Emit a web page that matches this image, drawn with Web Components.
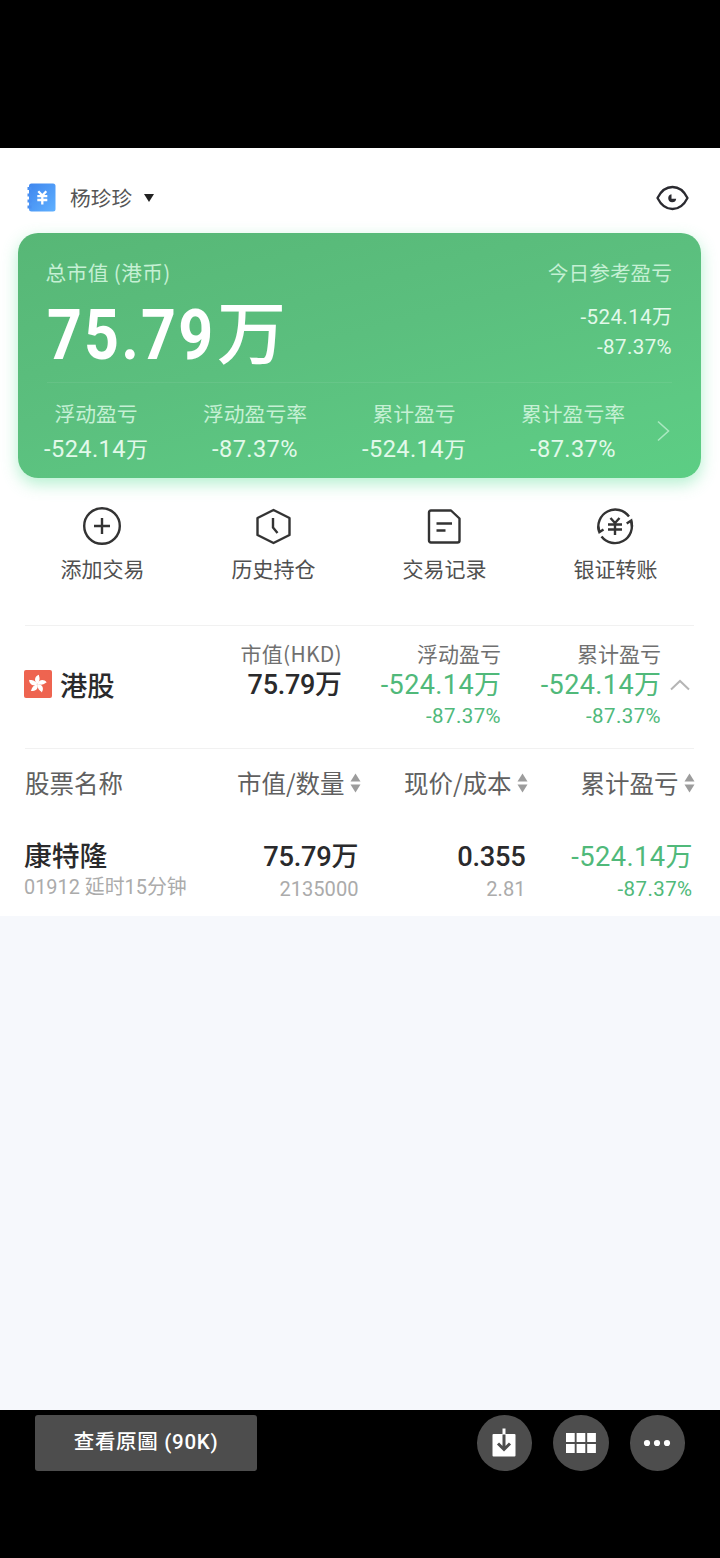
<!DOCTYPE html>
<html lang="zh-CN">
<head>
<meta charset="utf-8">
<meta name="viewport" content="width=device-width, initial-scale=1">
<title>持仓</title>
<style>
    body {
        margin: 0;
        background: #000;
        font-family: "Noto Sans CJK SC", sans-serif;
        color: #2a2a2c;
    }
</style>
</head>
<body>

<template id="template-amount">
    <style>
        :host {
            display: block;
            white-space: nowrap;
            font-family: Roboto, "Noto Sans CJK SC", sans-serif;
            font-size: var(--size, 24px);
            letter-spacing: var(--spacing, 0.4px);
        }
        .number {
            display: inline-block;
            transform: var(--condense, none);
            transform-origin: 0 50%;
            margin-right: var(--pull, 0);
        }
        .unit {
            font-family: "Noto Sans CJK SC", sans-serif;
            font-size: var(--unit-size, 0.9em);
            font-weight: var(--unit-weight, inherit);
            line-height: 1px;
            letter-spacing: 0;
        }
    </style>
    <span class="number"></span><span class="unit"></span>
</template>

<template id="template-header">
    <style>
        :host {
            display: flex;
            align-items: center;
            height: 85px;
            padding: 0 31px 0 27px;
            box-sizing: border-box;
            font-size: 20.7px;
            line-height: 30px;
            color: #555;
        }
        .name {
            margin-left: 14px;
            padding-top: 12px;
        }
        .book { margin-top: 14px; }
        .caret {
            margin: 14px auto 0 11px;
        }
        .eye { margin-top: 14px; }
        svg { display: block; }
    </style>
    <svg class="book" width="29" height="29" viewBox="0 0 29 29">
        <defs>
            <linearGradient id="book" x1="0" y1="0" x2="1" y2="1">
                <stop offset="0" stop-color="#3f86ee"/>
                <stop offset="1" stop-color="#5fb0ff"/>
            </linearGradient>
        </defs>
        <rect x="2" y="0.5" width="26.5" height="28" rx="2.5" fill="url(#book)"/>
        <path d="M0.5 5.500h4M0.5 12h4M0.5 18h4M0.500 24h4" stroke="#4a90f2" stroke-width="3"/>
        <path d="M11.300 8.300l4 4.200 4-4.200M10.300 13.200h10M10.300 17h10M15.300 12.500v9" fill="none" stroke="#fff" stroke-width="2.300"/>
    </svg>
    <div class="name"><slot></slot></div>
    <svg class="caret" width="12" height="10" viewBox="0 0 12 10">
        <path d="M1 1h10L6 9z" fill="#222"/>
    </svg>
    <svg class="eye" width="33" height="26" viewBox="0 0 33 26" fill="none">
        <path d="M1.500 13C5 6 10 2 16.500 2S28 6 31.500 13C28 20 23 24 16.500 24S5 20 1.500 13z" stroke="#2a2a30" stroke-width="2.300" stroke-linejoin="round"/>
        <path d="M15.500 9.300A4 4 0 1 0 20.200 13.700H15.500z" fill="#2a2a30"/>
    </svg>
</template>

<template id="template-card">
    <style>
        :host {
            display: block;
            height: 245px;
            margin: 0 19px 0 17.5px;
            border-radius: 20px;
            background: linear-gradient(165deg, #57b776 0%, #5bbf7e 45%, #5dc983 80%, #5cce84 100%);
            box-shadow: 0 6px 16px rgba(92, 222, 150, 0.45);
            color: #e2f9ea;
        }
        .top {
            display: flex;
            justify-content: space-between;
            height: 150px;
            margin: 0 29px;
            box-sizing: border-box;
            padding-top: 24px;
            border-bottom: 1px solid rgba(255, 255, 255, 0.07);
        }
        .label {
            font-size: 20.7px;
            line-height: 30px;
            color: #c5f0d4;
        }
        .hkd {
            letter-spacing: 0.4px;
            margin-left: -1px;
        }
        .today {
            text-align: right;
            --size: 20.5px;
            --unit-size: 20px;
            line-height: 29.5px;
        }
        .today .label { margin-bottom: 16px; }
        .total {
            --size: 70px;
            --unit-size: 69px;
            --unit-weight: 500;
            --spacing: 2.5px;
            --condense: scaleX(0.87);
            --pull: -23px;
            font-weight: 700;
            line-height: 96px;
            color: #fff;
        }
    </style>
    <div class="top">
        <div>
            <div class="label hkd">总市值 (港币)</div>
            <fund-amount class="total" value="75.79" unit="万"></fund-amount>
        </div>
        <div class="today">
            <div class="label">今日参考盈亏</div>
            <fund-amount value="-524.14" unit="万"></fund-amount>
            <fund-amount value="-87.37%"></fund-amount>
        </div>
    </div>
    <slot></slot>
</template>

<template id="template-stats">
    <style>
        :host {
            display: grid;
            grid-template-columns: repeat(4, 159px) 1fr;
            margin-left: -1px;
            padding-top: 15px;
        }
        svg {
            display: block;
            margin: 22px 0 0 3px;
        }
    </style>
    <slot></slot>
    <svg width="15" height="22" viewBox="0 0 15 22">
        <path d="M2 1.500L12.500 11 2 20.500" fill="none" stroke="#a9e8c0" stroke-width="1.600"/>
    </svg>
</template>

<template id="template-stat">
    <style>
        :host {
            display: block;
            text-align: center;
        }
        .label {
            font-size: 20.8px;
            line-height: 30px;
            color: #c5f0d4;
        }
        fund-amount {
            --size: 23.6px;
            --unit-size: 22px;
            --spacing: 0.4px;
            line-height: 43px;
        }
    </style>
    <div class="label"></div>
    <fund-amount></fund-amount>
</template>

<template id="template-actions">
    <style>
        :host {
            display: grid;
            grid-template-columns: repeat(4, 171px);
            margin-left: 17px;
            height: 147px;
            padding-top: 29px;
            box-sizing: border-box;
        }
    </style>
    <slot></slot>
</template>

<template id="template-action">
    <style>
        :host {
            display: flex;
            flex-direction: column;
            align-items: center;
            font-size: 21px;
            line-height: 30px;
            color: #505050;
        }
        ::slotted(svg) {
            display: block;
            width: 40px;
            height: 40px;
            margin: -1px 1px 7px 0;
            fill: none;
            stroke: #333;
            stroke-width: 2.4px;
        }
    </style>
    <slot name="icon"></slot>
    <div><slot></slot></div>
</template>

<template id="template-market">
    <style>
        :host {
            display: grid;
            grid-template-columns: 200px 117px 159px 160px 1fr;
            height: 122px;
            margin: 0 26px 0 25px;
            border-top: 1px solid #f1f1f1;
            border-bottom: 1px solid #f1f1f1;
        }
        .market {
            display: flex;
            align-items: center;
            gap: 8px;
            height: 116px;
            margin-left: -1px;
            font-size: 27.3px;
            font-weight: 500;
        }
        .market span { margin-top: -1px; }
        .fold {
            margin: 53px 0 0 8px;
        }
    </style>
    <div class="market">
        <svg width="28" height="28" viewBox="0 0 28 28">
            <defs>
                <path id="petal" d="M14 14.500C10.500 12 10.500 7 15.500 5.200C15 7 18 9 14 14.500z"/>
            </defs>
            <rect width="28" height="28" rx="2" fill="#ee6450"/>
            <g fill="#fff" transform="translate(-0.500 -0.500)">
                <use href="#petal"/>
                <use href="#petal" transform="rotate(72 14 14.500)"/>
                <use href="#petal" transform="rotate(144 14 14.500)"/>
                <use href="#petal" transform="rotate(216 14 14.500)"/>
                <use href="#petal" transform="rotate(288 14 14.500)"/>
            </g>
        </svg>
        <span>港股</span>
    </div>
    <slot></slot>
    <svg class="fold" width="22" height="12" viewBox="0 0 22 12">
        <path d="M2 10.500L11 2l9 8.500" fill="none" stroke="#b5b5b5" stroke-width="2"/>
    </svg>
</template>

<template id="template-figure">
    <style>
        :host {
            display: block;
            text-align: right;
            padding-top: 12px;
            font-weight: 500;
            --size: 27px;
            --unit-size: 27px;
        }
        :host([loss]) {
            font-weight: 400;
            --color: #50b97a;
        }
        .label {
            font-size: 21px;
            font-weight: 400;
            line-height: 30px;
            color: #707070;
        }
        .main {
            line-height: 35px;
            color: var(--color, #2a2a2c);
        }
        :host(:not([loss])) .main { --spacing: -0.3px; }
        :host(:not([loss])) .label { letter-spacing: 0.3px; }
        .rate {
            --size: 20.5px;
            line-height: 27px;
            color: var(--color);
        }
    </style>
    <div class="label"></div>
    <fund-amount class="main"></fund-amount>
    <fund-amount class="rate"></fund-amount>
</template>

<template id="template-table">
    <style>
        :host {
            display: grid;
            grid-template-columns: 200px 133.5px 167px 167px;
            margin: 0 26px 0 25px;
            height: 167px;
            box-sizing: border-box;
            padding-top: 16px;
            grid-template-rows: 74px auto;
        }
    </style>
    <slot></slot>
</template>

<template id="template-heading">
    <style>
        :host {
            display: flex;
            justify-content: flex-end;
            align-items: center;
            white-space: nowrap;
            height: 36px;
            font-size: 24.5px;
            line-height: 36px;
            color: #606060;
        }
        :host([plain]) { justify-content: flex-start; }
        :host([plain]) svg { display: none; }
        svg {
            flex: none;
            margin: 0 -2px 0 5px;
        }
    </style>
    <slot></slot>
    <svg width="11" height="20" viewBox="0 0 11 20" fill="#9c9c9c">
        <path d="M5.500 0.500L10.500 8.500H0.500z"/>
        <path d="M5.500 19.500L0.500 11.500h10z"/>
    </svg>
</template>

<template id="template-cell">
    <style>
        :host {
            display: block;
            text-align: right;
            white-space: nowrap;
            --size: 27.3px;
            --unit-size: 27px;
        }
        :host([name]) {
            text-align: left;
            margin: -3px 0 0 -1px;
        }
        .name {
            font-size: 27.8px;
            font-weight: 500;
            line-height: 37px;
        }
        .main {
            line-height: 36px;
            font-weight: 500;
            --spacing: -0.3px;
        }
        .sub {
            --size: 20.1px;
            --spacing: 0;
            line-height: 29px;
            color: #ababab;
        }
        :host([name]) .sub {
            --size: 19.9px;
        }
        :host([loss]) {
            color: #50b97a;
        }
        :host([loss]) .main {
            font-weight: 400;
            --spacing: 0.4px;
        }
        :host([loss]) .sub {
            color: inherit;
            --size: 20.500px;
            --spacing: 0.4px;
        }
    </style>
    <div class="name"></div>
    <fund-amount class="main"></fund-amount>
    <fund-amount class="sub"></fund-amount>
</template>

<template id="template-viewer-bar">
    <style>
        :host {
            display: flex;
            align-items: center;
            gap: 21px;
            height: 148px;
            box-sizing: border-box;
            padding: 5px 35px 87px;
            background: #000;
        }
        .original {
            width: 222px;
            height: 56px;
            margin-right: auto;
            border-radius: 3px;
            background: #4d4d4d;
            color: #fff;
            font: 500 20.5px/55px Roboto, "Noto Sans CJK TC", sans-serif;
            text-align: center;
            letter-spacing: 0.7px;
        }
        .round {
            display: grid;
            place-items: center;
            width: 55.500px;
            height: 56px;
            border-radius: 50%;
            background: #4d4d4d;
        }
        svg { display: block; fill: #fff; }
    </style>
    <div class="original"><slot></slot></div>
    <div class="round">
        <svg width="30" height="30" viewBox="0 0 30 30">
            <path d="M4.500 6h21q1 0 1 1v20.500q0 1-1 1h-21q-1 0-1-1V7q0-1 1-1z"/>
            <path d="M13.500 0.500h3V6h-3z"/>
            <path d="M15 6.500V21M9 15.500l6 6 6-6" fill="none" stroke="#4d4d4d" stroke-width="3"/>
        </svg>
    </div>
    <div class="round">
        <svg width="30" height="20" viewBox="0 0 30 20">
            <rect width="8.700" height="9"/>
            <rect x="10.600" width="8.700" height="9"/>
            <rect x="21.200" width="8.700" height="9"/>
            <rect y="11" width="8.700" height="9"/>
            <rect x="10.600" y="11" width="8.700" height="9"/>
            <rect x="21.200" y="11" width="8.700" height="9"/>
        </svg>
    </div>
    <div class="round">
        <svg width="28" height="8" viewBox="0 0 28 8">
            <circle cx="4" cy="4" r="3.100"/>
            <circle cx="14" cy="4" r="3.100"/>
            <circle cx="24" cy="4" r="3.100"/>
        </svg>
    </div>
</template>

<template id="template-page">
    <style>
        :host {
            display: flex;
            flex-direction: column;
            height: 1558px;
            box-sizing: border-box;
            padding-top: 148px;
        }
        .sheet {
            height: 768px;
            background: #fff;
        }
        .rest {
            flex: 1;
            background: #f6f8fc;
        }
    </style>
    <div class="sheet"><slot></slot></div>
    <div class="rest"></div>
    <slot name="footer"></slot>
</template>

<fund-page>
    <fund-header>杨珍珍</fund-header>
    <fund-card>
        <fund-stats>
            <fund-stat label="浮动盈亏" value="-524.14" unit="万"></fund-stat>
            <fund-stat label="浮动盈亏率" value="-87.37%"></fund-stat>
            <fund-stat label="累计盈亏" value="-524.14" unit="万"></fund-stat>
            <fund-stat label="累计盈亏率" value="-87.37%"></fund-stat>
        </fund-stats>
    </fund-card>
    <fund-actions>
        <fund-action>
            <svg slot="icon" viewBox="0 0 40 40">
                <circle cx="20" cy="20" r="17.800"/>
                <path d="M20 12v16M12 20h16"/>
            </svg>
            添加交易
        </fund-action>
        <fund-action>
            <svg slot="icon" viewBox="0 0 40 40" stroke-linejoin="round">
                <path d="M20.500 4L36.500 12v17L20.500 37 4.500 29V12z"/>
                <path d="M20 12v9.500l4.500 5.500"/>
            </svg>
            历史持仓
        </fund-action>
        <fund-action>
            <svg slot="icon" viewBox="0 0 40 40" stroke-linejoin="round">
                <path d="M7 4.500H27L35.500 12.500V34.500q0 2-2 2H7q-2 0-2-2V6.500q0-2 2-2z"/>
                <path d="M12.500 17.500h15.500M12.500 24.500h9"/>
            </svg>
            交易记录
        </fund-action>
        <fund-action>
            <svg slot="icon" viewBox="0 0 40 40">
                <path d="M4.200 26A17 17 0 0 1 34 10.500"/>
                <path d="M3.200 20.500L4.500 26l4-2.500"/>
                <path d="M36 14.500A17 17 0 0 1 6.500 30.500"/>
                <path d="M37 20.500L36.200 14.500l-4.500 3"/>
                <path d="M15.500 12l4.500 5 4.500-5M13 18.500h14M13 23.500h14M20 17v12"/>
            </svg>
            银证转账
        </fund-action>
    </fund-actions>
    <fund-market>
        <fund-figure label="市值(HKD)" value="75.79" unit="万"></fund-figure>
        <fund-figure label="浮动盈亏" value="-524.14" unit="万" rate="-87.37%" loss></fund-figure>
        <fund-figure label="累计盈亏" value="-524.14" unit="万" rate="-87.37%" loss></fund-figure>
    </fund-market>
    <fund-table>
        <fund-heading plain>股票名称</fund-heading>
        <fund-heading>市值/数量</fund-heading>
        <fund-heading>现价/成本</fund-heading>
        <fund-heading>累计盈亏</fund-heading>
        <fund-cell name="康特隆" sub="01912 延时15分钟"></fund-cell>
        <fund-cell value="75.79" unit="万" sub="2135000"></fund-cell>
        <fund-cell value="0.355" sub="2.81"></fund-cell>
        <fund-cell value="-524.14" unit="万" sub="-87.37%" loss></fund-cell>
    </fund-table>
    <viewer-bar slot="footer">查看原圖 (90K)</viewer-bar>
</fund-page>

<script>
    class TemplateElement extends HTMLElement {
        constructor() {
            super();
            const template = document.getElementById(this.constructor.template).content;
            this.shadow = this.attachShadow({ mode: 'open' });
            this.shadow.appendChild(template.cloneNode(true));
        }
        $(selector) {
            return this.shadow.querySelector(selector);
        }
    }

    function setAmount(el, value, unit) {
        if (value === null) {
            el.remove();
            return;
        }
        el.setAttribute('value', value);
        if (unit) el.setAttribute('unit', unit);
    }

    customElements.define('fund-amount', class extends TemplateElement {
        static template = 'template-amount';
        static get observedAttributes() {
            return ['value', 'unit'];
        }
        attributeChangedCallback(name, oldValue, newValue) {
            this.$(name === 'value' ? '.number' : '.unit').textContent = newValue;
        }
    });

    customElements.define('fund-stat', class extends TemplateElement {
        static template = 'template-stat';
        connectedCallback() {
            this.$('.label').textContent = this.getAttribute('label');
            setAmount(this.$('fund-amount'), this.getAttribute('value'), this.getAttribute('unit'));
        }
    });

    customElements.define('fund-figure', class extends TemplateElement {
        static template = 'template-figure';
        connectedCallback() {
            this.$('.label').textContent = this.getAttribute('label');
            setAmount(this.$('.main'), this.getAttribute('value'), this.getAttribute('unit'));
            setAmount(this.$('.rate'), this.getAttribute('rate'));
        }
    });

    customElements.define('fund-cell', class extends TemplateElement {
        static template = 'template-cell';
        connectedCallback() {
            const name = this.getAttribute('name');
            if (name) this.$('.name').textContent = name;
            else this.$('.name').remove();
            setAmount(this.$('.main'), this.getAttribute('value'), this.getAttribute('unit'));
            setAmount(this.$('.sub'), this.getAttribute('sub'));
        }
    });

    // the rest only have slots and styles
    const plain = {
        'fund-header': 'template-header',
        'fund-card': 'template-card',
        'fund-stats': 'template-stats',
        'fund-actions': 'template-actions',
        'fund-action': 'template-action',
        'fund-market': 'template-market',
        'fund-table': 'template-table',
        'fund-heading': 'template-heading',
        'viewer-bar': 'template-viewer-bar',
        'fund-page': 'template-page',
    };
    for (const [tag, id] of Object.entries(plain)) {
        customElements.define(tag, class extends TemplateElement {
            static template = id;
        });
    }
</script>
</body>
</html>
